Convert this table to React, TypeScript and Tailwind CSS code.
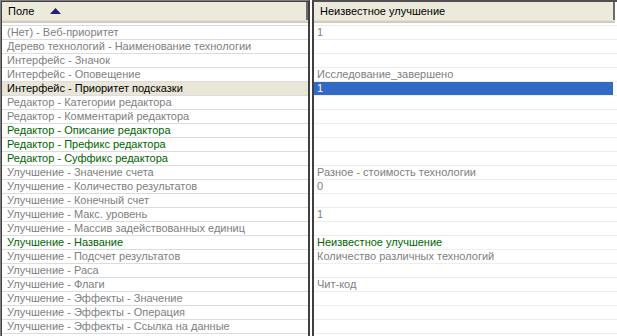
import React from "react";

type Row = { label: string; labelColor: "gray" | "green" | "black"; value: string; valueColor: "gray" | "green" | "sel" };

const rows: Row[] = [
  { label: "(Нет) - Веб-приоритет", labelColor: "gray", value: "1", valueColor: "gray" },
  { label: "Дерево технологий - Наименование технологии", labelColor: "gray", value: "", valueColor: "gray" },
  { label: "Интерфейс - Значок", labelColor: "gray", value: "", valueColor: "gray" },
  { label: "Интерфейс - Оповещение", labelColor: "gray", value: "Исследование_завершено", valueColor: "gray" },
  { label: "Интерфейс - Приоритет подсказки", labelColor: "black", value: "1", valueColor: "sel" },
  { label: "Редактор - Категории редактора", labelColor: "gray", value: "", valueColor: "gray" },
  { label: "Редактор - Комментарий редактора", labelColor: "gray", value: "", valueColor: "gray" },
  { label: "Редактор - Описание редактора", labelColor: "green", value: "", valueColor: "gray" },
  { label: "Редактор - Префикс редактора", labelColor: "green", value: "", valueColor: "gray" },
  { label: "Редактор - Суффикс редактора", labelColor: "green", value: "", valueColor: "gray" },
  { label: "Улучшение - Значение счета", labelColor: "gray", value: "Разное - стоимость технологии", valueColor: "gray" },
  { label: "Улучшение - Количество результатов", labelColor: "gray", value: "0", valueColor: "gray" },
  { label: "Улучшение - Конечный счет", labelColor: "gray", value: "", valueColor: "gray" },
  { label: "Улучшение - Макс. уровень", labelColor: "gray", value: "1", valueColor: "gray" },
  { label: "Улучшение - Массив задействованных единиц", labelColor: "gray", value: "", valueColor: "gray" },
  { label: "Улучшение - Название", labelColor: "green", value: "Неизвестное улучшение", valueColor: "green" },
  { label: "Улучшение - Подсчет результатов", labelColor: "gray", value: "Количество различных технологий", valueColor: "gray" },
  { label: "Улучшение - Раса", labelColor: "gray", value: "", valueColor: "gray" },
  { label: "Улучшение - Флаги", labelColor: "gray", value: "Чит-код", valueColor: "gray" },
  { label: "Улучшение - Эффекты - Значение", labelColor: "gray", value: "", valueColor: "gray" },
  { label: "Улучшение - Эффекты - Операция", labelColor: "gray", value: "", valueColor: "gray" },
  { label: "Улучшение - Эффекты - Ссылка на данные", labelColor: "gray", value: "", valueColor: "gray" },
];

const colorClass = (c: string) =>
  c === "green" ? "text-[#006400]" : c === "black" ? "text-black" : "text-[#808080]";

function Header({ children }: { children: React.ReactNode }) {
  return (
    <div className="flex flex-col">
      <div className="h-[18px] bg-[#ebeadb] flex items-center pl-[6px] border-r-2 border-r-[#6b6b6b] text-black">
        {children}
      </div>
      <div className="h-px bg-[#e2decd]" />
      <div className="h-px bg-[#d6d2c2]" />
      <div className="h-px bg-[#cbc7b8]" />
      <div className="h-[2px] bg-white" />
    </div>
  );
}

export default function App() {
  return (
    <div
      className="w-[617px] h-[336px] bg-white flex overflow-hidden text-[11px] leading-[13px]"
      style={{ fontFamily: '"Liberation Sans", Arial, sans-serif' }}
    >
      {/* Left panel */}
      <div className="w-[310px] h-full border-l border-t border-[#808080] border-r-2 border-r-[#404040]">
        <div className="h-full border-l border-t border-[#404040] flex flex-col">
          <Header>
            <span>Поле</span>
            <svg width="11" height="6" viewBox="0 0 11 6" className="ml-[16px] mt-[-1px]">
              <polygon points="0,6 5.5,0 11,6" fill="#22226e" />
            </svg>
          </Header>
          <div className="flex flex-col border-t border-[#dcdcdc]">
            {rows.map((r, i) => (
              <div
                key={i}
                className={`h-[14px] shrink-0 border-b border-[#dcdcdc] pl-[5px] flex items-center whitespace-nowrap overflow-hidden ${
                  r.labelColor === "black" ? "bg-[#e9e6d7]" : ""
                } ${colorClass(r.labelColor)}`}
              >
                {r.label}
              </div>
            ))}
          </div>
        </div>
      </div>
      {/* Right panel */}
      <div className="flex-1 h-full border-l-2 border-white">
        <div className="h-full border-l-2 border-t-2 border-[#404040] border-t-[#505050] flex flex-col">
          <div className="w-[301px]">
            <Header>
              <span>Неизвестное улучшение</span>
            </Header>
          </div>
          <div className="flex flex-col border-t border-[#eeeeee]">
            {rows.map((r, i) => (
              <div key={i} className="h-[14px] shrink-0 border-b border-[#eeeeee] flex">
                <div
                  className={`w-[299px] h-full pl-[3px] flex items-center whitespace-nowrap overflow-hidden ${
                    r.valueColor === "sel" ? "bg-[#316ac5] text-white" : colorClass(r.valueColor)
                  }`}
                >
                  {r.value}
                </div>
              </div>
            ))}
          </div>
        </div>
      </div>
    </div>
  );
}
